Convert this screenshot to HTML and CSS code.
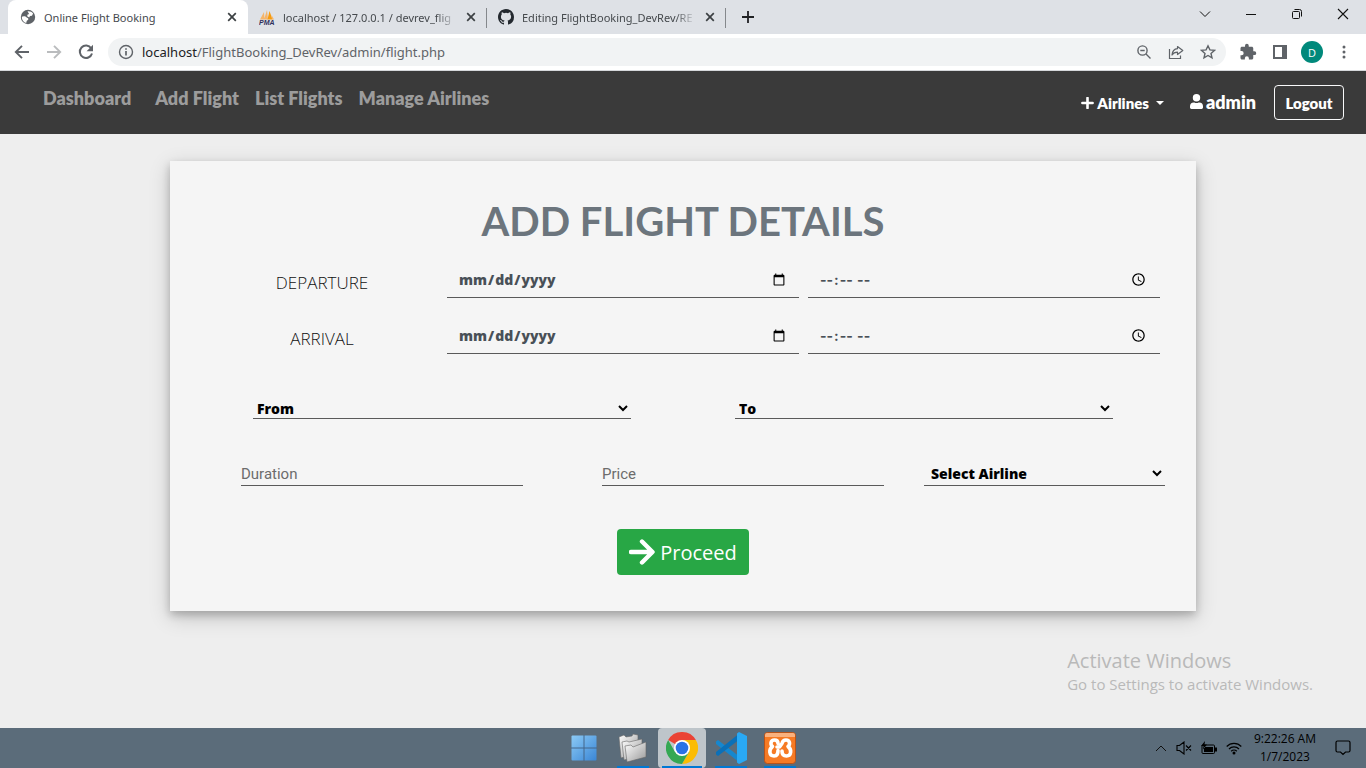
FILE: index.html
```html
<!DOCTYPE html>
<html lang="en-US">
<head>
<meta charset="utf-8">
<title>Online Flight Booking</title>
<link rel="stylesheet" href="styles.css">
</head>
<body>
<header class="browser">
  <div class="tabstrip">
    <div class="tab tab-active">
      <svg class="favicon" viewBox="0 0 16 16"><circle cx="8" cy="8" r="7.2" fill="#5f6368"/><path d="M1.800 7.800c1.600-.9 3.800-.6 4.600.4.900 1 2 .7 2 1.800 0 1.300-1.700 1-1.900 2.700l-.3 1.400C3.500 13.300 1.700 10.800 1.800 7.800zM7.500 2.200c2.300-.3 4.300.6 5.600 2.300l-1.100 2.300-2 .3-.8 1.300-2-1.200.2-1.500 1.700-.8z" fill="#fff"/></svg>
      <span class="tab-title">Online Flight Booking</span>
      <button class="tab-close" aria-label="Close tab"><svg viewBox="0 0 10 10" width="10" height="10"><path d="M1.200 1.200l7.600 7.600M8.800 1.200L1.200 8.800" stroke="#3c4043" stroke-width="1.700"/></svg></button>
    </div>
    <div class="tab">
      <svg class="favicon" viewBox="0 0 16 16"><path d="M1 10.500L5 3l.5 7.500zM5 10.500L8 1l1 9.500z" fill="#f5b56a"/><path d="M8.500 10.500L10.500 2l3 8.500z" fill="#f89c0e"/><path d="M12.500 6l2.500 4.500h-2z" fill="#f5b56a"/><text x="0" y="16" class="pma">PMA</text></svg>
      <span class="tab-title">localhost / 127.0.0.1 / devrev_flig</span>
      <button class="tab-close" aria-label="Close tab"><svg viewBox="0 0 10 10" width="10" height="10"><path d="M1.200 1.200l7.600 7.600M8.800 1.200L1.200 8.800" stroke="#3c4043" stroke-width="1.700"/></svg></button>
    </div>
    <div class="tab">
      <svg class="favicon" viewBox="0 0 16 16"><path fill="#24292f" d="M8 0C3.580 0 0 3.580 0 8c0 3.540 2.290 6.530 5.470 7.590.4.070.55-.17.55-.38 0-.19-.01-.82-.01-1.490-2.010.37-2.530-.49-2.690-.94-.09-.23-.48-.94-.82-1.130-.28-.15-.68-.52-.01-.53.63-.01 1.080.58 1.230.82.72 1.210 1.870.87 2.330.66.070-.52.28-.87.51-1.070-1.780-.2-3.640-.89-3.640-3.950 0-.87.31-1.590.82-2.150-.08-.2-.36-1.020.08-2.120 0 0 .67-.21 2.200.82a7.500 7.500 0 0 1 4 0c1.530-1.040 2.200-.82 2.200-.82.44 1.100.16 1.920.08 2.120.51.56.82 1.270.82 2.150 0 3.070-1.870 3.750-3.650 3.950.29.25.54.73.54 1.480 0 1.070-.01 1.930-.01 2.200 0 .21.15.46.55.38A8 8 0 0 0 16 8c0-4.420-3.580-8-8-8z"/></svg>
      <span class="tab-title">Editing FlightBooking_DevRev/RE</span>
      <button class="tab-close" aria-label="Close tab"><svg viewBox="0 0 10 10" width="10" height="10"><path d="M1.200 1.200l7.600 7.600M8.800 1.200L1.200 8.800" stroke="#3c4043" stroke-width="1.700"/></svg></button>
    </div>
    <button class="new-tab" aria-label="New tab"><svg viewBox="0 0 12 12" width="12" height="12"><path d="M6 0v12M0 6h12" stroke="#202124" stroke-width="1.800"/></svg></button>
    <div class="window-buttons">
      <button aria-label="Search tabs"><svg viewBox="0 0 12 12" width="12" height="12"><path d="M1 3.500l5 5 5-5" fill="none" stroke="#111"/></svg></button>
      <button aria-label="Minimize"><svg viewBox="0 0 12 12" width="12" height="12"><path d="M1 6.500h10" stroke="#111"/></svg></button>
      <button aria-label="Restore"><svg viewBox="0 0 12 12" width="12" height="12"><g fill="none" stroke="#111"><rect x="1.500" y="3.500" width="7" height="7" rx="1"/><path d="M3.500 1.500h5a2 2 0 0 1 2 2v5"/></g></svg></button>
      <button aria-label="Close"><svg viewBox="0 0 12 12" width="12" height="12"><path d="M1 1l10 10M11 1L1 11" stroke="#111" stroke-width="1.100"/></svg></button>
    </div>
  </div>
  <div class="toolbar">
    <button class="tool" aria-label="Back"><svg viewBox="0 0 16 16" width="16" height="16"><path d="M15 8H2M8 1.800L1.800 8 8 14.200" fill="none" stroke="#5f6368" stroke-width="1.900"/></svg></button>
    <button class="tool" aria-label="Forward"><svg viewBox="0 0 16 16" width="16" height="16"><path d="M1 8h13M8 1.800L14.200 8 8 14.200" fill="none" stroke="#babcbe" stroke-width="1.900"/></svg></button>
    <button class="tool" aria-label="Reload"><svg viewBox="0 0 16 16" width="16" height="16"><path d="M13.200 4.300A6.200 6.200 0 1 0 14 9.500" fill="none" stroke="#5f6368" stroke-width="2"/><path d="M15 .8v6.400H8.600z" fill="#5f6368"/></svg></button>
    <div class="omnibox">
      <svg class="glyph" viewBox="0 0 16 16"><circle cx="8" cy="8" r="6.500" fill="none" stroke="#5f6368" stroke-width="1.400"/><path d="M8 7v4.500M8 4.200v1.600" stroke="#5f6368" stroke-width="1.700"/></svg>
      <div class="address"><span class="host">localhost</span>/FlightBooking_DevRev/admin/flight.php</div>
      <button class="tool" aria-label="Zoom"><svg viewBox="0 0 16 16" width="16" height="16"><g fill="none" stroke="#5f6368" stroke-width="1.400"><circle cx="6.500" cy="6.500" r="4.600"/><path d="M10 10l4.500 4.500M4.300 6.500h4.400"/></g></svg></button>
      <button class="tool" aria-label="Share"><svg viewBox="0 0 16 16" width="16" height="16"><g fill="none" stroke="#5f6368" stroke-width="1.200"><path d="M1.500 5v9.500h11v-3"/><path d="M9.500 2.500L14.800 6.500l-5.300 4V8.200C7 8.200 5.200 9 4 11c.3-3.500 2.300-6 5.500-6.300z" stroke-linejoin="round"/></g></svg></button>
      <button class="tool" aria-label="Bookmark"><svg viewBox="0 0 16 16" width="16" height="16"><path d="M8 1.800l1.900 4.100 4.500.5-3.400 3 1 4.400L8 11.500l-4 2.300 1-4.400-3.400-3 4.500-.5z" fill="none" stroke="#5f6368" stroke-width="1.400"/></svg></button>
    </div>
    <button class="tool" aria-label="Extensions"><svg viewBox="0 0 24 24" width="18" height="18"><path fill="#5f6368" d="M20.500 11H19V7c0-1.100-.9-2-2-2h-4V3.500a2.500 2.500 0 0 0-5 0V5H4c-1.100 0-2 .9-2 2v3.800h1.500a2.700 2.700 0 0 1 0 5.400H2V20c0 1.100.9 2 2 2h3.800v-1.500a2.700 2.700 0 0 1 5.400 0V22H17c1.100 0 2-.9 2-2v-4h1.500a2.500 2.500 0 0 0 0-5z"/></svg></button>
    <button class="tool" aria-label="Side panel"><svg viewBox="0 0 14 14" width="14" height="14"><path fill="#5f6368" fill-rule="evenodd" d="M0 0h14v14H0zM2 2v10h7V2z"/></svg></button>
    <button class="tool" aria-label="Profile"><span class="avatar">D</span></button>
    <button class="tool" aria-label="Menu"><svg viewBox="0 0 4 14" width="4" height="14"><g fill="#5f6368"><circle cx="2" cy="2" r="1.500"/><circle cx="2" cy="7" r="1.500"/><circle cx="2" cy="12" r="1.500"/></g></svg></button>
  </div>
</header>

<nav class="navbar">
  <a class="nav-link nav-home" href="#">Dashboard</a>
  <a class="nav-link" href="#">Add Flight</a>
  <a class="nav-link" href="#">List Flights</a>
  <a class="nav-link" href="#">Manage Airlines</a>
  <div class="nav-right">
    <button class="airlines"><svg viewBox="0 0 12 12" width="13" height="12"><path d="M6 .9v10.200M.9 6h10.200" stroke="#fff" stroke-width="2.600" stroke-linecap="round"/></svg>Airlines<span class="caret"></span></button>
    <a class="user" href="#"><svg viewBox="0 0 14 16" width="13" height="15"><path fill="#fff" d="M7 8a4 4 0 1 0 0-8 4 4 0 0 0 0 8zm2.800 1h-.5a5.400 5.400 0 0 1-4.600 0h-.5A4.200 4.200 0 0 0 0 13.200v1.300C0 15.300.7 16 1.500 16h11c.8 0 1.500-.7 1.500-1.500v-1.300A4.200 4.200 0 0 0 9.800 9z"/></svg>admin</a>
    <button class="logout">Logout</button>
  </div>
</nav>

<main class="page">
  <form class="card">
    <h1 class="card-title">ADD FLIGHT DETAILS</h1>
    <div class="schedule">
      <label class="row-label" for="dep-date">DEPARTURE</label>
      <input class="when" id="dep-date" type="date">
      <input class="when when-time" type="time" aria-label="Departure time">
      <label class="row-label" for="arr-date">ARRIVAL</label>
      <input class="when" id="arr-date" type="date">
      <input class="when when-time" type="time" aria-label="Arrival time">
    </div>
    <div class="route">
      <select class="choice" aria-label="From"><option>From</option></select>
      <select class="choice" aria-label="To"><option>To</option></select>
    </div>
    <div class="details">
      <input class="text duration" type="text" placeholder="Duration" aria-label="Duration">
      <input class="text" type="text" placeholder="Price" aria-label="Price">
      <select class="choice airline" aria-label="Airline"><option>Select Airline</option></select>
    </div>
    <button class="proceed" type="button"><svg viewBox="0 0 26 26" width="26" height="26"><path d="M2 13h20M13 2.500L23.500 13 13 23.500" fill="none" stroke="#fff" stroke-width="4.400" stroke-linecap="round" stroke-linejoin="round"/></svg>Proceed</button>
  </form>
  <div class="watermark">
    <p class="watermark-title">Activate Windows</p>
    <p class="watermark-text">Go to Settings to activate Windows.</p>
  </div>
</main>

<footer class="taskbar">
  <div class="apps">
    <button class="app app-start" aria-label="Start"><svg viewBox="0 0 26 26" width="26" height="26"><defs><linearGradient id="win" x1="0" y1="0" x2="1" y2="1"><stop offset="0" stop-color="#8ccaf5"/><stop offset="1" stop-color="#3a86d6"/></linearGradient></defs><rect x=".5" y=".5" width="25" height="25" rx="1" fill="url(#win)"/><path d="M13 0v26M0 13h26" stroke="#45668a"/></svg></button>
    <button class="app app-open" aria-label="File Explorer"><svg viewBox="0 0 30 30" width="30" height="30"><defs><linearGradient id="fold" x1="0" y1="0" x2="1" y2="1"><stop offset="0" stop-color="#fff"/><stop offset="1" stop-color="#999"/></linearGradient></defs><g fill="url(#fold)" stroke="#666" stroke-width=".6"><path d="M1 4l5-2 2 2 6-1 1-2 5 1v18L3 25z"/><path d="M4 9l5-1 2 1 13-3v17L6 27z"/><path d="M7 13l6-1 2 2 13-5v15L9 29z"/></g></svg></button>
    <button class="app app-open app-current" aria-label="Chrome"><svg viewBox="0 0 32 32" width="32" height="32"><path fill="#ea4335" d="M16 16L2.140 8A16 16 0 0 1 29.860 8z"/><path fill="#fbbc04" d="M16 8h13.860A16 16 0 0 1 16 32l6.930-12z"/><path fill="#34a853" d="M2.140 8A16 16 0 0 0 16 32l6.930-12L16 16 9.070 20z"/><circle cx="16" cy="16" r="8" fill="#fff"/><circle cx="16" cy="16" r="6.300" fill="#2a72e5"/></svg></button>
    <button class="app app-open" aria-label="Visual Studio Code"><svg viewBox="0 0 32 32" width="32" height="32"><path d="M1 9.500l2-1.500L25 25v6L1 12z" fill="#1687cf"/><path d="M1 22.500L3 24 25 7V1L1 20z" fill="#0b70b8"/><path d="M24 0l8 4v24l-8 4-2-1.500V1.500z" fill="#29a9f5"/></svg></button>
    <button class="app app-open" aria-label="XAMPP"><svg viewBox="0 0 32 32" width="32" height="32"><rect x=".5" y=".5" width="31" height="31" rx="3" fill="#f67a24" stroke="#b8531a"/><path d="M1 3a2 2 0 0 1 2-2h26a2 2 0 0 1 2 2v2H1z" fill="#fab17e"/><path d="M14 11.500C14 9 12.500 8 10.500 8 6.500 8 6 12.500 8.500 14.500c-4 3-3.500 9.500 1.500 9.500 3.500 0 4-2.500 4-5.500M13 15h2.500l2.500-3.500C18.500 9 20 8 22 8c4 0 4.500 4.500 2 6.500 4 3 3.500 9.500-1.500 9.500-3.500 0-4.500-2.500-4.500-5" fill="none" stroke="#fff" stroke-width="3.600" stroke-linejoin="round" stroke-linecap="round"/></svg></button>
  </div>
  <div class="tray">
    <svg viewBox="0 0 12 12" width="12" height="12"><path d="M1 9l5-5 5 5" fill="none" stroke="#111"/></svg>
    <svg viewBox="0 0 16 14" width="16" height="14"><path d="M1 4.500h2.500L8 1v12L3.500 9.500H1zM10 4.500l5 5M15 4.500l-5 5" fill="none" stroke="#000" stroke-width="1.100"/></svg>
    <svg viewBox="0 0 16 14" width="16" height="14"><rect x="1" y="4" width="12.500" height="8.500" rx="1" fill="none" stroke="#000"/><path d="M3 6h9v5H3zM14 6.500h2v4h-2zM4 0L0 5h2.500L2 8.500 6 3.500H3.500z" fill="#000"/></svg>
    <svg viewBox="0 0 16 14" width="16" height="14"><g fill="none" stroke="#000" stroke-width="1.200"><path d="M.7 5.500a10 10 0 0 1 14.600 0M3 8a7 7 0 0 1 10 0M5.200 10.300a4 4 0 0 1 5.600 0"/></g><circle cx="8" cy="12" r="1.500"/></svg>
    <div class="clock"><div>9:22:26 AM</div><div>1/7/2023</div></div>
    <svg viewBox="0 0 16 16" width="16" height="16"><path d="M2.500 1h11A1.500 1.500 0 0 1 15 2.500v8a1.500 1.500 0 0 1-1.500 1.500H10.500L8 14.500 5.500 12h-3A1.500 1.500 0 0 1 1 10.500v-8A1.500 1.500 0 0 1 2.500 1z" fill="none" stroke="#000" stroke-width="1.200"/></svg>
  </div>
</footer>
</body>
</html>
```
FILE: styles.css
```css
* { box-sizing: border-box; }
body {
  margin: 0;
  min-height: 100vh;
  display: flex;
  flex-direction: column;
  font-family: "Open Sans", "Noto Sans", sans-serif;
  background: #eee;
}
button {
  margin: 0;
  padding: 0;
  border: 0;
  background: none;
  font: inherit;
  color: inherit;
}
svg { display: block; flex: none; }
a { text-decoration: none; }

/* browser window */
.tabstrip {
  display: flex;
  align-items: stretch;
  height: 34px;
  padding-left: 8px;
  background: #dee1e6;
}
.tab {
  display: flex;
  align-items: center;
  width: 239px;
  padding: 0 10px 0 11px;
  font: 11px "Noto Sans", sans-serif;
  color: #45494d;
}
.tab + .tab { background: linear-gradient(#85888c, #85888c) right 8px / 1px 20px no-repeat; }
.tab-active {
  width: 240px;
  padding-left: 12px;
  background: #fff;
  border-radius: 8px 8px 0 0;
}
.favicon { width: 16px; height: 16px; }
.pma { font: italic bold 7px "Liberation Sans", sans-serif; fill: #30305c; }
.tab-title {
  flex: 1;
  margin: 0 8px;
  white-space: nowrap;
}
.tab + .tab .tab-title {
  -webkit-mask-image: linear-gradient(90deg, #000 88%, transparent);
  mask-image: linear-gradient(90deg, #000 88%, transparent);
}
.tab-close {
  display: grid;
  place-items: center;
  width: 12px;
  height: 16px;
}
.new-tab {
  display: grid;
  place-items: center;
  width: 44px;
}
.window-buttons {
  display: flex;
  height: 28px;
  margin-left: auto;
}
.window-buttons button {
  display: grid;
  place-items: center;
  width: 46px;
}
.toolbar {
  display: flex;
  align-items: center;
  height: 37px;
  padding: 0 6px;
  background: #fff;
  border-bottom: 1px solid #d5d7da;
}
.tool {
  display: grid;
  place-items: center;
  flex: none;
  width: 32px;
  height: 28px;
}
.omnibox {
  display: flex;
  align-items: center;
  flex: 1;
  height: 28px;
  margin: 0 6px;
  padding: 0 2px 0 10px;
  border-radius: 14px;
  background: #f1f3f4;
}
.glyph { width: 16px; height: 16px; }
.address {
  flex: 1;
  margin-left: 8px;
  font-family: "Noto Sans", sans-serif;
  font-size: 13px;
  color: #5f6368;
}
.host { color: #202124; }
.avatar {
  display: grid;
  place-items: center;
  width: 22px;
  height: 22px;
  border-radius: 50%;
  background: #00897b;
  color: #fff;
  font-size: 11px;
}

/* site navigation */
.navbar {
  display: flex;
  align-items: center;
  height: 63px;
  padding: 0 22px 0 43px;
  background: #3a3a3a;
  font-family: Lato, sans-serif;
  font-weight: 800;
}
.nav-link {
  margin: 0 16px 10px 0;
  font-size: 18px;
  line-height: 24px;
  color: #9c9c9c;
}
.nav-home { margin-right: 24px; }
.nav-right {
  display: flex;
  align-items: center;
  margin-left: auto;
  color: #fff;
}
.airlines {
  display: flex;
  align-items: center;
  gap: 3px;
  margin-right: 26px;
  font-size: 15px;
}
.caret {
  margin-left: 4px;
  border: 4px solid transparent;
  border-top-color: #fff;
  border-bottom: 0;
}
.user {
  display: flex;
  align-items: center;
  gap: 3px;
  margin-right: 18px;
  padding-bottom: 2px;
  font-size: 18px;
  line-height: 24px;
  color: #fff;
}
.logout {
  width: 70px;
  height: 35px;
  border: 1px solid #f8f9fa;
  border-radius: 4px;
  font-size: 15px;
}

/* flight form */
.page {
  position: relative;
  flex: 1;
  padding: 27px 170px;
}
.card {
  display: flex;
  flex-direction: column;
  padding: 36px 0;
  background: #f5f5f5;
  box-shadow: 0 4px 8px rgba(0, 0, 0, 0.2), 0 6px 20px rgba(0, 0, 0, 0.19);
}
.card-title {
  margin: 0 0 15px;
  font: 700 40px/48px Lato, sans-serif;
  text-align: center;
  color: #6c757d;
}
.schedule {
  display: grid;
  grid-template-columns: 232px 1fr 1fr;
  gap: 18px 9px;
  align-items: center;
  padding: 0 36px;
}
.row-label {
  padding-top: 8px;
  font-size: 17px;
  line-height: 24px;
  font-weight: 300;
  text-align: center;
  color: #111;
}
.when, .text, .choice {
  width: 100%;
  min-width: 0;
  margin: 0;
  border: 0;
  border-bottom: 1px solid #5a5a5a;
  border-radius: 0;
  background: transparent;
}
.when {
  height: 38px;
  padding: 2px 11px 0;
  font: 800 14px "Open Sans", sans-serif;
  color: #495057;
}
.when-time { font: 700 14px Inter, sans-serif; }
.choice {
  height: 21px;
  padding: 0;
  font: 800 14px "Open Sans", sans-serif;
  color: #000;
}
.route {
  display: grid;
  grid-template-columns: 1fr 1fr;
  gap: 104px;
  margin-top: 44px;
  padding: 0 83px;
}
.details {
  display: grid;
  grid-template-columns: 321fr 282fr 241fr;
  gap: 40px;
  margin-top: 41px;
  padding: 0 31px 0 71px;
}
.text {
  height: 26px;
  padding: 2px 0 0;
  font: 15px Roboto, sans-serif;
}
.text::placeholder { color: #6c6c6c; }
.duration { width: auto; margin-right: 39px; }
.airline { height: 26px; padding: 2px 0 0 3px; }
.proceed {
  display: flex;
  align-items: center;
  align-self: center;
  gap: 5px;
  height: 46px;
  margin-top: 43px;
  padding: 0 12px;
  border-radius: 4px;
  background: #28a745;
  color: #fff;
  font-size: 20px;
}
.watermark {
  position: absolute;
  right: 53px;
  bottom: 34px;
  color: #b9b9b9;
}
.watermark p { margin: 0; }
.watermark-title { font-size: 20px; line-height: 26px; }
.watermark-text { font-size: 15px; line-height: 20px; }

/* taskbar */
.taskbar {
  display: grid;
  grid-template-columns: 1fr auto 1fr;
  height: 40px;
  background: #5b6c7a;
}
.apps {
  grid-column: 2;
  display: flex;
  gap: 1px;
  padding-right: 3px;
}
.app {
  display: grid;
  place-items: center;
  width: 48px;
}
.app-open { background: linear-gradient(#0078d4, #0078d4) center bottom / 32px 2px no-repeat; }
.app-current {
  border-radius: 4px;
  background: linear-gradient(#0078d4, #0078d4) center bottom / 40px 2px no-repeat #bec5ca;
}
.tray {
  display: flex;
  align-items: center;
  justify-content: flex-end;
  gap: 9px;
  padding-right: 15px;
}
.clock {
  margin: 0 10px 0 3px;
  font-size: 12px;
  line-height: 18px;
  text-align: center;
  color: #000;
}
```
